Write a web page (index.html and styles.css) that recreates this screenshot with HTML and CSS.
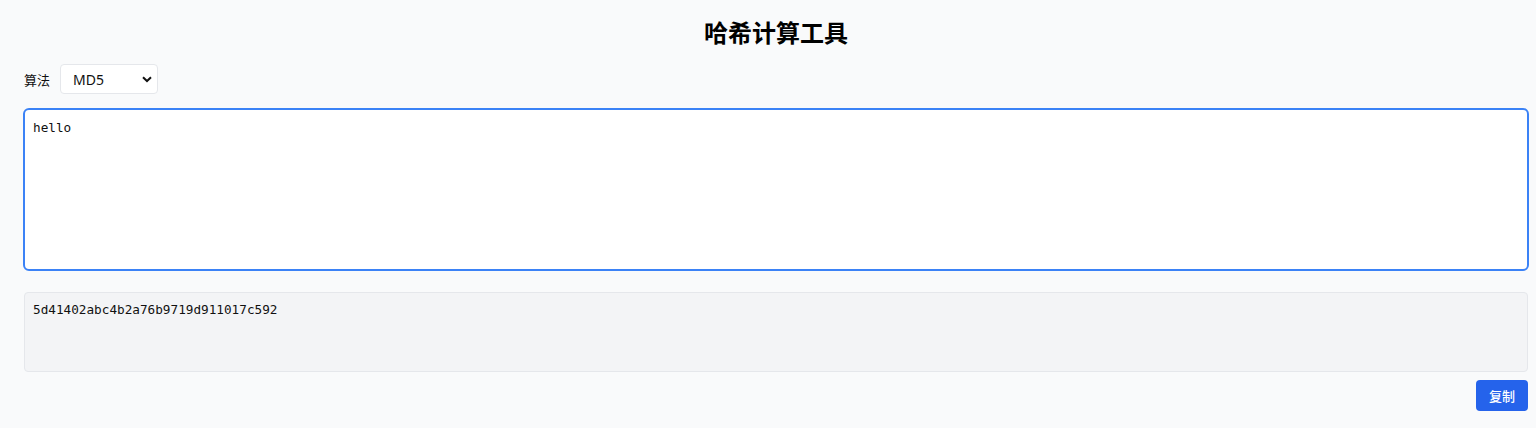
FILE: index.html
```html
<!DOCTYPE html>
<html lang="zh-CN">
<head>
<meta charset="utf-8">
<title>哈希计算工具</title>
<link rel="stylesheet" href="styles.css">
</head>
<body>
<div class="page">
  <h1 class="title">哈希计算工具</h1>
  <div class="row">
    <label class="label" for="algo">算法</label>
    <div class="select-wrap">
      <select id="algo" class="select">
        <option>MD5</option>
        <option>SHA-1</option>
        <option>SHA-256</option>
      </select>
      <svg class="chev" width="10" height="7" viewBox="0 0 10 7"><path d="M1 1.2 L5 5 L9 1.2" fill="none" stroke="#111" stroke-width="2"/></svg>
    </div>
  </div>
  <textarea class="input">hello</textarea>
  <div class="output">5d41402abc4b2a76b9719d911017c592</div>
  <div class="actions">
    <button class="btn">复制</button>
  </div>
</div>
</body>
</html>
```

FILE: styles.css
```css
html, body {
  margin: 0;
  padding: 0;
  background: #f9fafb;
}
body {
  font-family: "Noto Sans", "Noto Sans CJK SC", sans-serif;
  color: #111;
}
.page {
  padding: 16px 8px 16px 24px;
  display: flex;
  flex-direction: column;
}
.title {
  margin: 0;
  font-size: 24px;
  line-height: 32px;
  font-weight: 700;
  text-align: center;
  font-family: "Noto Sans CJK SC", sans-serif;
  color: #000;
}
.row {
  margin-top: 16px;
  display: flex;
  align-items: center;
  gap: 10px;
  height: 30px;
}
.label {
  font-size: 13px;
  font-family: "Noto Sans CJK SC", sans-serif;
  color: #111;
}
.select-wrap {
  position: relative;
  display: flex;
}
.select {
  appearance: none;
  -webkit-appearance: none;
  width: 98px;
  height: 30px;
  padding: 0 0 0 12px;
  border: 1px solid #e5e7eb;
  border-radius: 4px;
  background: #fff;
  font-family: "Noto Sans", sans-serif;
  font-size: 14px;
  color: #111;
  outline: none;
}
.chev {
  position: absolute;
  left: 82px;
  top: 12px;
  pointer-events: none;
}
.input {
  margin: 14px 0 0 -1px;
  box-sizing: border-box;
  width: calc(100% + 2px);
  height: 163px;
  border: 2px solid #3b82f6;
  border-radius: 6px;
  background: #fff;
  padding: 9px 8px 8px;
  font-family: "DejaVu Sans Mono", monospace;
  font-size: 12.7px;
  line-height: 18px;
  color: #111;
  resize: none;
  outline: none;
}
.output {
  margin-top: 21px;
  box-sizing: border-box;
  height: 80px;
  border: 1px solid #e5e7eb;
  border-radius: 4px;
  background: #f3f4f6;
  padding: 8px;
  font-family: "DejaVu Sans Mono", monospace;
  font-size: 12.7px;
  line-height: 18px;
  color: #111;
}
.actions {
  margin-top: 8px;
  display: flex;
  justify-content: flex-end;
}
.btn {
  height: 31px;
  width: 52px;
  padding: 0;
  border: none;
  border-radius: 4px;
  background: #2563eb;
  color: #fff;
  font-family: "Noto Sans CJK SC", sans-serif;
  font-size: 13px;
  font-weight: 500;
}
```
